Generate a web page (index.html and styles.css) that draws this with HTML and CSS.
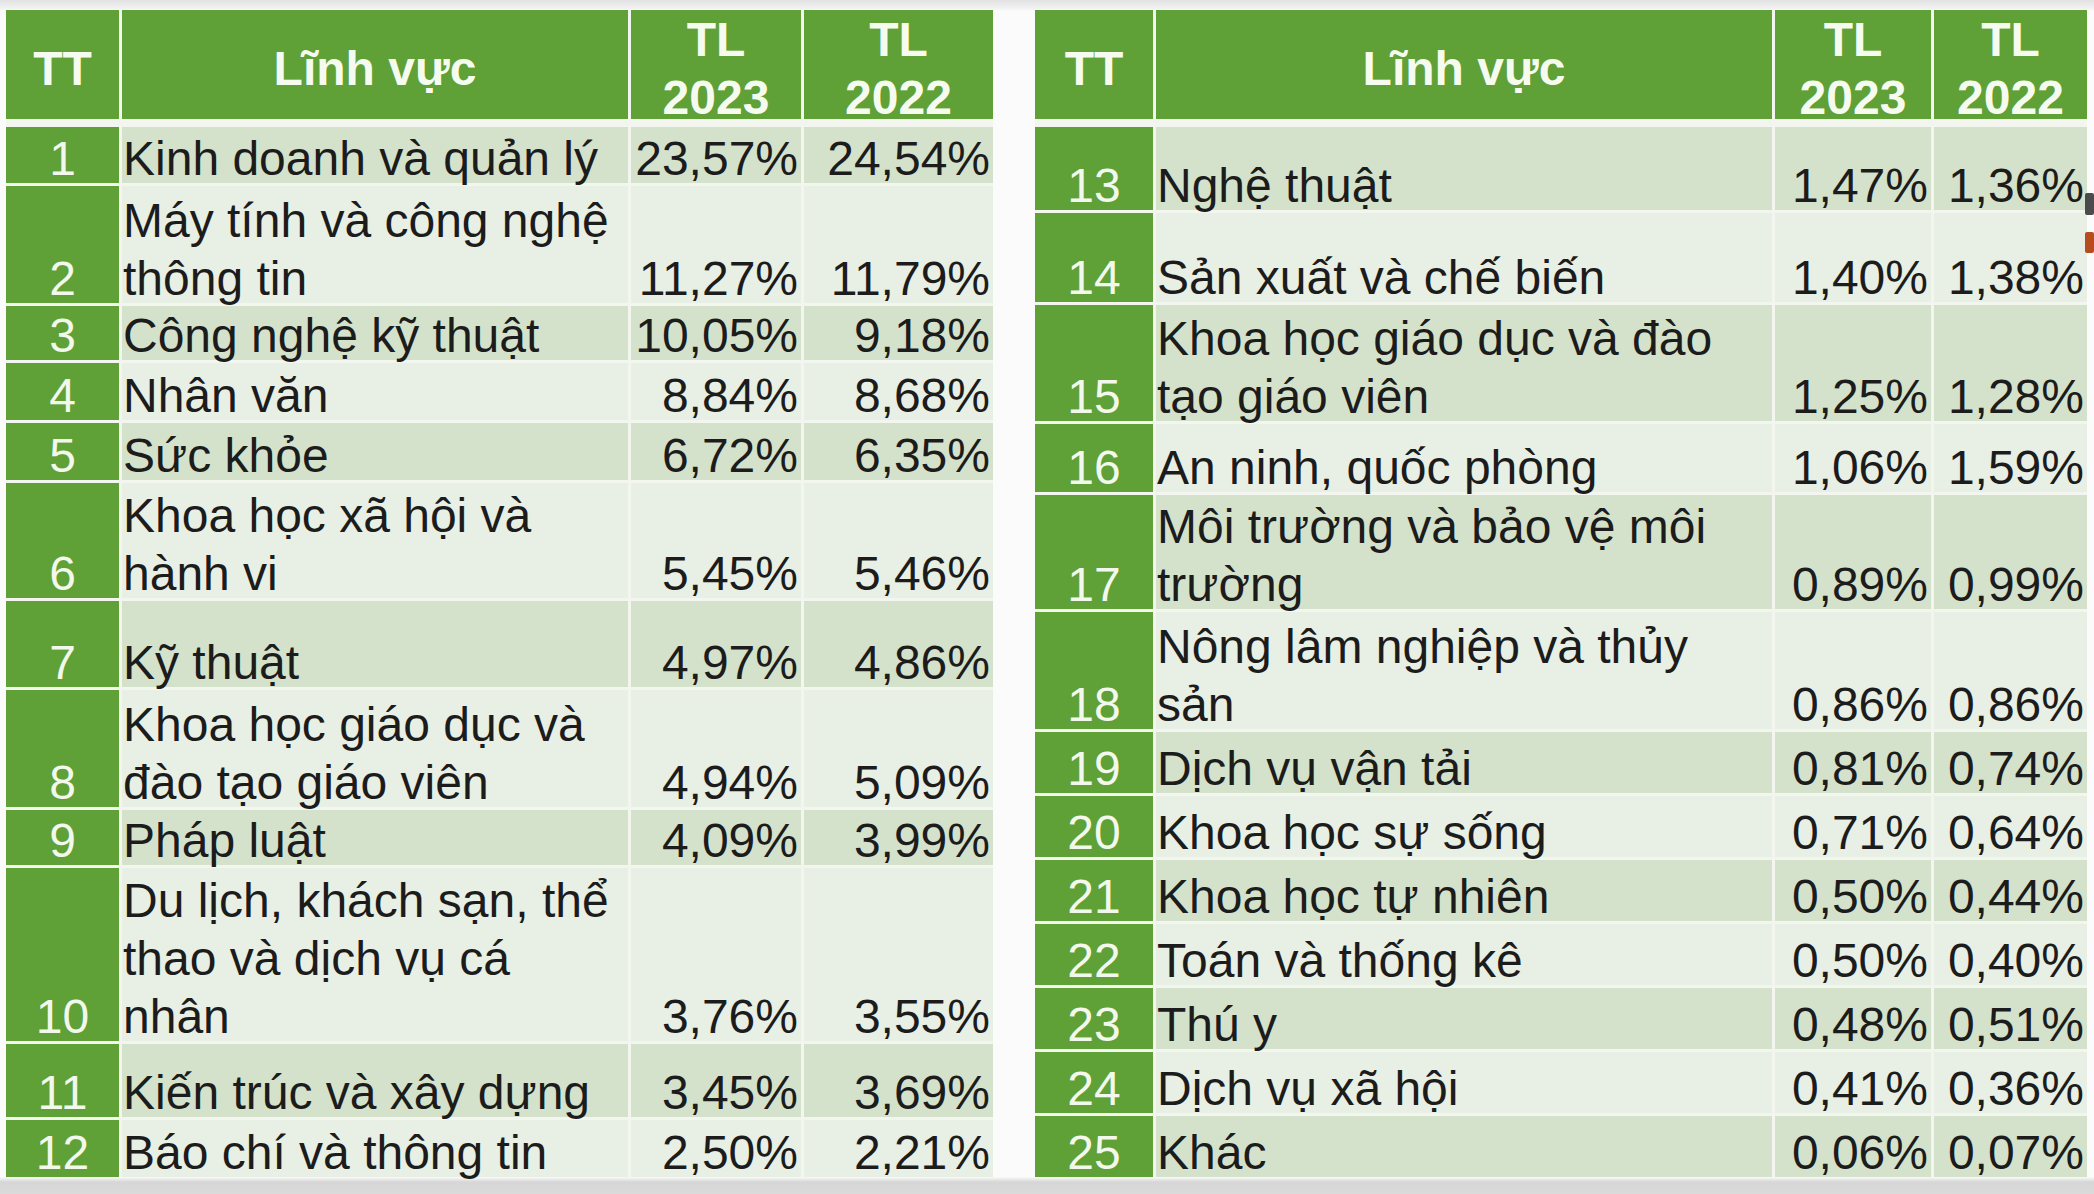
FILE: index.html
```html
<!DOCTYPE html>
<html lang="vi">
<head>
<meta charset="utf-8">
<title>Tỷ lệ theo lĩnh vực</title>
<link rel="stylesheet" href="styles.css">
</head>
<body>
<main class="slide">
  <section class="tbl tbl-left">
    <div class="hd">TT</div>
    <div class="hd">Lĩnh vực</div>
    <div class="hd">TL<br>2023</div>
    <div class="hd">TL<br>2022</div>

    <div class="row dk"><div class="no"><span>1</span></div><div class="name"><span>Kinh doanh và quản lý</span></div><div class="num"><span>23,57%</span></div><div class="num"><span>24,54%</span></div></div>
    <div class="row lt"><div class="no"><span>2</span></div><div class="name"><span>Máy tính và công nghệ<br>thông tin</span></div><div class="num"><span>11,27%</span></div><div class="num"><span>11,79%</span></div></div>
    <div class="row dk"><div class="no"><span>3</span></div><div class="name"><span>Công nghệ kỹ thuật</span></div><div class="num"><span>10,05%</span></div><div class="num"><span>9,18%</span></div></div>
    <div class="row lt"><div class="no"><span>4</span></div><div class="name"><span>Nhân văn</span></div><div class="num"><span>8,84%</span></div><div class="num"><span>8,68%</span></div></div>
    <div class="row dk"><div class="no"><span>5</span></div><div class="name"><span>Sức khỏe</span></div><div class="num"><span>6,72%</span></div><div class="num"><span>6,35%</span></div></div>
    <div class="row lt"><div class="no"><span>6</span></div><div class="name"><span>Khoa học xã hội và<br>hành vi</span></div><div class="num"><span>5,45%</span></div><div class="num"><span>5,46%</span></div></div>
    <div class="row dk"><div class="no"><span>7</span></div><div class="name"><span>Kỹ thuật</span></div><div class="num"><span>4,97%</span></div><div class="num"><span>4,86%</span></div></div>
    <div class="row lt"><div class="no"><span>8</span></div><div class="name"><span>Khoa học giáo dục và<br>đào tạo giáo viên</span></div><div class="num"><span>4,94%</span></div><div class="num"><span>5,09%</span></div></div>
    <div class="row dk"><div class="no"><span>9</span></div><div class="name"><span>Pháp luật</span></div><div class="num"><span>4,09%</span></div><div class="num"><span>3,99%</span></div></div>
    <div class="row lt"><div class="no"><span>10</span></div><div class="name"><span>Du lịch, khách sạn, thể<br>thao và dịch vụ cá<br>nhân</span></div><div class="num"><span>3,76%</span></div><div class="num"><span>3,55%</span></div></div>
    <div class="row dk"><div class="no"><span>11</span></div><div class="name"><span>Kiến trúc và xây dựng</span></div><div class="num"><span>3,45%</span></div><div class="num"><span>3,69%</span></div></div>
    <div class="row lt"><div class="no"><span>12</span></div><div class="name"><span>Báo chí và thông tin</span></div><div class="num"><span>2,50%</span></div><div class="num"><span>2,21%</span></div></div>
  </section>

  <section class="tbl tbl-right">
    <div class="hd">TT</div>
    <div class="hd">Lĩnh vực</div>
    <div class="hd">TL<br>2023</div>
    <div class="hd">TL<br>2022</div>

    <div class="row dk"><div class="no"><span>13</span></div><div class="name"><span>Nghệ thuật</span></div><div class="num"><span>1,47%</span></div><div class="num"><span>1,36%</span></div></div>
    <div class="row lt"><div class="no"><span>14</span></div><div class="name"><span>Sản xuất và chế biến</span></div><div class="num"><span>1,40%</span></div><div class="num"><span>1,38%</span></div></div>
    <div class="row dk"><div class="no"><span>15</span></div><div class="name"><span>Khoa học giáo dục và đào<br>tạo giáo viên</span></div><div class="num"><span>1,25%</span></div><div class="num"><span>1,28%</span></div></div>
    <div class="row lt"><div class="no"><span>16</span></div><div class="name"><span>An ninh, quốc phòng</span></div><div class="num"><span>1,06%</span></div><div class="num"><span>1,59%</span></div></div>
    <div class="row dk"><div class="no"><span>17</span></div><div class="name"><span>Môi trường và bảo vệ môi<br>trường</span></div><div class="num"><span>0,89%</span></div><div class="num"><span>0,99%</span></div></div>
    <div class="row lt"><div class="no"><span>18</span></div><div class="name"><span>Nông lâm nghiệp và thủy<br>sản</span></div><div class="num"><span>0,86%</span></div><div class="num"><span>0,86%</span></div></div>
    <div class="row dk"><div class="no"><span>19</span></div><div class="name"><span>Dịch vụ vận tải</span></div><div class="num"><span>0,81%</span></div><div class="num"><span>0,74%</span></div></div>
    <div class="row lt"><div class="no"><span>20</span></div><div class="name"><span>Khoa học sự sống</span></div><div class="num"><span>0,71%</span></div><div class="num"><span>0,64%</span></div></div>
    <div class="row dk"><div class="no"><span>21</span></div><div class="name"><span>Khoa học tự nhiên</span></div><div class="num"><span>0,50%</span></div><div class="num"><span>0,44%</span></div></div>
    <div class="row lt"><div class="no"><span>22</span></div><div class="name"><span>Toán và thống kê</span></div><div class="num"><span>0,50%</span></div><div class="num"><span>0,40%</span></div></div>
    <div class="row dk"><div class="no"><span>23</span></div><div class="name"><span>Thú y</span></div><div class="num"><span>0,48%</span></div><div class="num"><span>0,51%</span></div></div>
    <div class="row lt"><div class="no"><span>24</span></div><div class="name"><span>Dịch vụ xã hội</span></div><div class="num"><span>0,41%</span></div><div class="num"><span>0,36%</span></div></div>
    <div class="row dk"><div class="no"><span>25</span></div><div class="name"><span>Khác</span></div><div class="num"><span>0,06%</span></div><div class="num"><span>0,07%</span></div></div>
  </section>

  <div class="edge-mark edge-dark"></div>
  <div class="edge-mark edge-orange"></div>
</main>
</body>
</html>
```

FILE: styles.css
```css
html, body {
  margin: 0;
  padding: 0;
}

body {
  width: 2094px;
  height: 1194px;
  overflow: hidden;
  background: linear-gradient(to bottom,
    #e2e2e2 0px, #f1f1f1 8px, #fbfbfb 11px,
    #fbfbfb 1177px, #ececec 1179px, #d6d6d6 1182px, #dadada 1194px);
  font-family: "Liberation Sans", Arial, sans-serif;
}

.slide {
  position: relative;
  display: flex;
  align-items: flex-start;
  gap: 42px;
  padding: 10px 0 0 6px;
  height: 1184px;
}

.tbl {
  display: grid;
  column-gap: 3px;
  row-gap: 3px;
  background: #f2f6ef;
  font-size: 48px;
  line-height: 58px;
}

.tbl-left {
  grid-template-columns: 113px 506px 170px 189px;
  grid-template-rows: 114px 56px 117px 54px 57px 57px 115px 86px 117px 55px 173px 73px 57px;
}

.tbl-right {
  grid-template-columns: 118px 616px 156px 153px;
  grid-template-rows: 114px 83px 89px 116px 68px 114px 117px repeat(7, 61px);
}

.hd {
  background: #5fa037;
  color: #f6fbf0;
  font-weight: bold;
  text-align: center;
  display: flex;
  align-items: center;
  justify-content: center;
  padding-top: 8px;
  margin-bottom: 5px;
}

.row {
  display: contents;
}

.row > div {
  display: flex;
  align-items: flex-end;
}

.row > div > span {
  display: block;
  margin-bottom: -5px;
}

.dk > div {
  background: #d4e2cb;
}

.lt > div {
  background: #e8efe4;
}

.row > .no {
  background: #5fa037;
  color: #f2f8ec;
  justify-content: center;
}

.name {
  color: #1c1c1c;
  padding-left: 1px;
}

.num {
  color: #1c1c1c;
  justify-content: flex-end;
  padding-right: 3px;
}

.edge-mark {
  position: absolute;
  left: 2085px;
  width: 9px;
  border-radius: 2px;
}

.edge-dark {
  top: 193px;
  height: 22px;
  background: #4b4b4b;
}

.edge-orange {
  top: 232px;
  height: 21px;
  background: #b64d1e;
}
```
